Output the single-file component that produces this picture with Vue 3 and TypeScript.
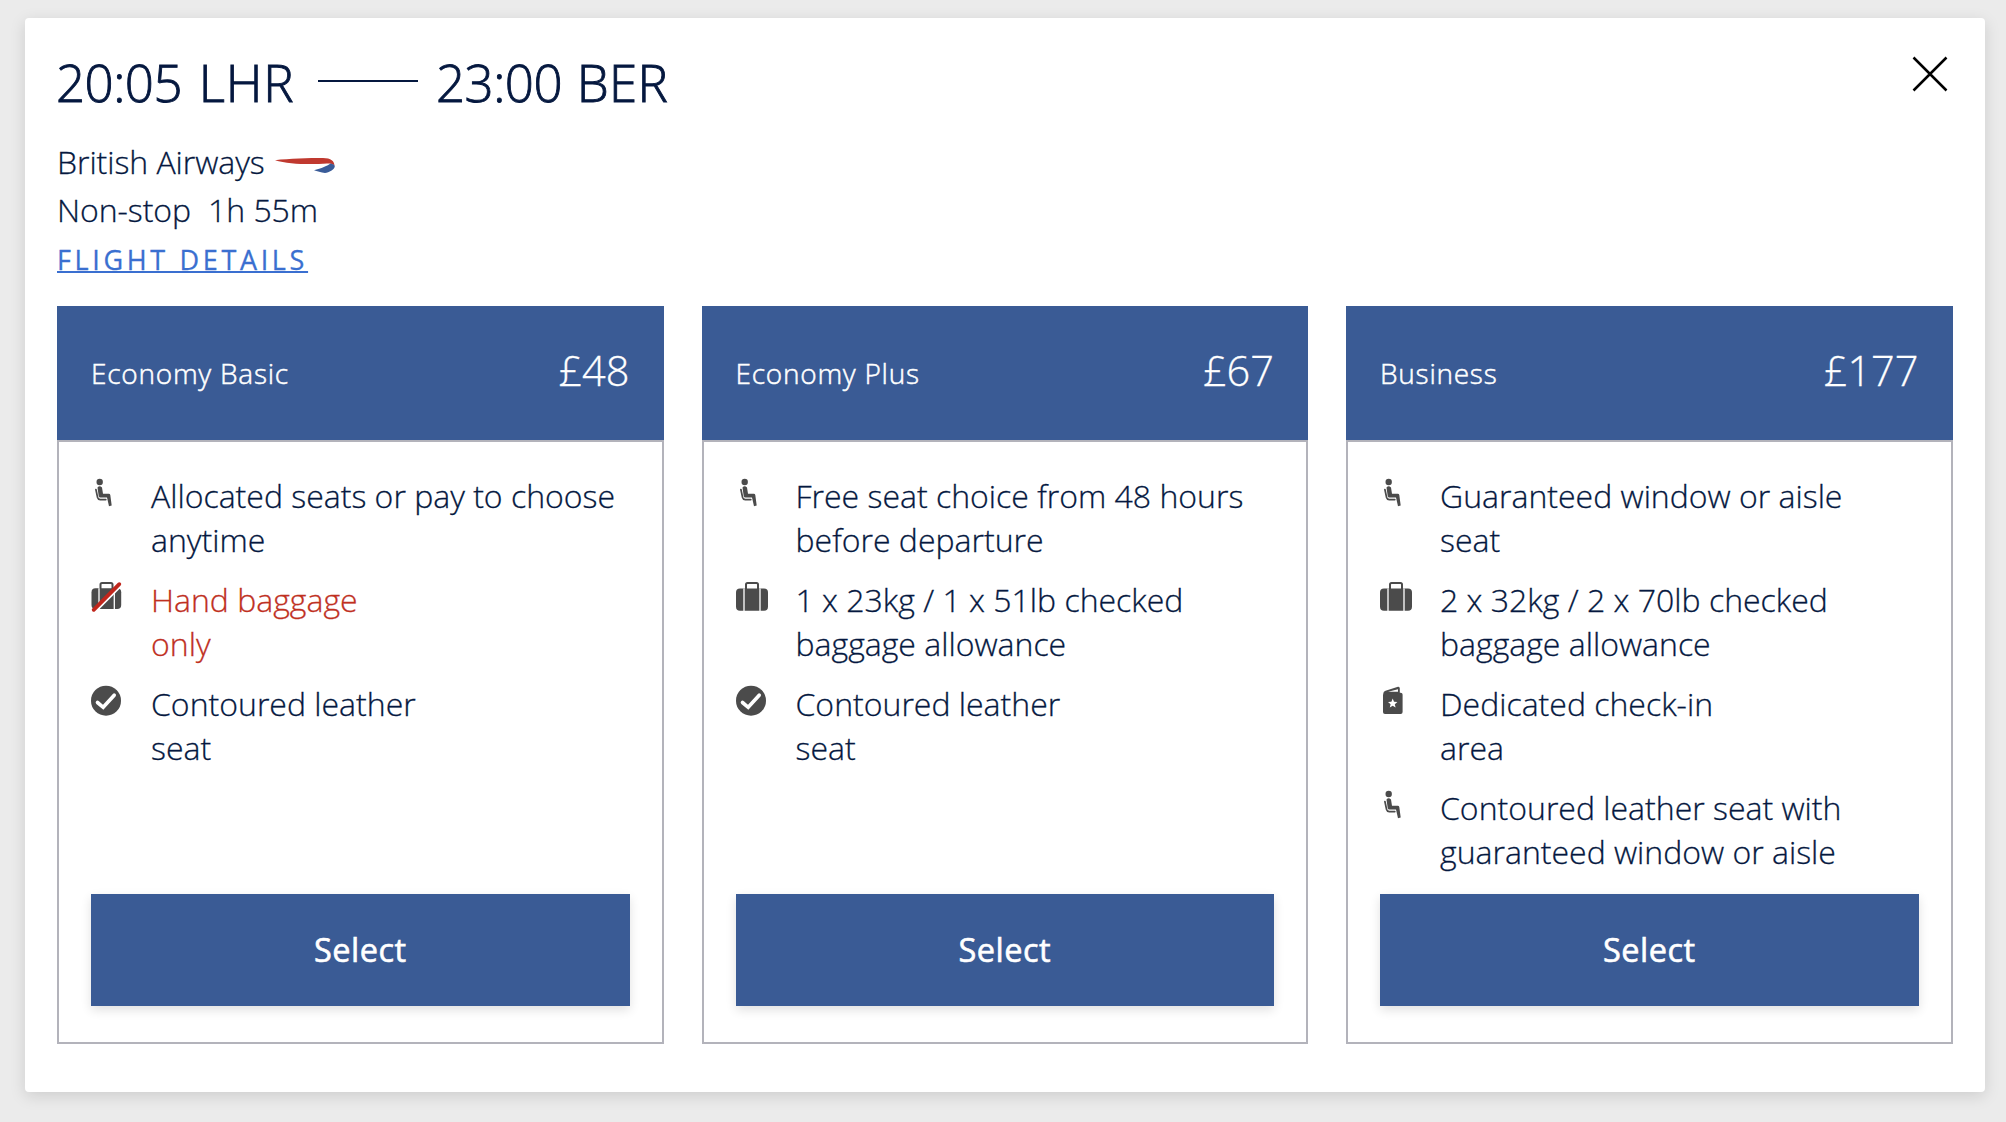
<script setup lang="ts">
type IconName = 'seat' | 'bag' | 'nobag' | 'check' | 'pass'

interface Feature {
  icon: IconName
  lines: string[]
  warn?: boolean
}

interface Fare {
  name: string
  price: string
  features: Feature[]
}

const fares: Fare[] = [
  {
    name: 'Economy Basic',
    price: '£48',
    features: [
      { icon: 'seat', lines: ['Allocated seats or pay to choose', 'anytime'] },
      { icon: 'nobag', lines: ['Hand baggage', 'only'], warn: true },
      { icon: 'check', lines: ['Contoured leather', 'seat'] },
    ],
  },
  {
    name: 'Economy Plus',
    price: '£67',
    features: [
      { icon: 'seat', lines: ['Free seat choice from 48 hours', 'before departure'] },
      { icon: 'bag', lines: ['1 x 23kg / 1 x 51lb checked', 'baggage allowance'] },
      { icon: 'check', lines: ['Contoured leather', 'seat'] },
    ],
  },
  {
    name: 'Business',
    price: '£177',
    features: [
      { icon: 'seat', lines: ['Guaranteed window or aisle', 'seat'] },
      { icon: 'bag', lines: ['2 x 32kg / 2 x 70lb checked', 'baggage allowance'] },
      { icon: 'pass', lines: ['Dedicated check-in', 'area'] },
      { icon: 'seat', lines: ['Contoured leather seat with', 'guaranteed window or aisle'] },
    ],
  },
]
</script>

<template>
  <main class="page">
    <section class="card">
      <header class="top">
        <h1 class="route">
          <span class="point">20:05 <b class="lhr">LHR</b></span>
          <i class="dash"></i>
          <span class="point">23:00 <b class="ber">BER</b></span>
        </h1>
        <button class="close" aria-label="Close">
          <svg width="36" height="36" viewBox="0 0 36 36">
            <path d="M1.500 1.500 34.500 34.500M34.500 1.500 1.500 34.500" stroke="#000" stroke-width="2.500" fill="none" />
          </svg>
        </button>
      </header>

      <div class="info">
        <div class="airline">
          <span>British Airways</span>
          <svg class="ribbon" width="62" height="18" viewBox="0 0 62 18">
            <path d="M0 4.200C14 2.500 34 2 48 2C56 2 59.500 5 59.500 10C58.500 8 56 7.500 52 7.500C36 8.500 14 8.500 0 4.200Z" fill="#c0392f" />
            <path d="M39 14.300C46 12.500 53 9.500 55.500 7.500C58 7.800 59.800 9 59.800 10.500C59.500 13.500 54 16.500 50 17C46 16.500 42 15.500 39 14.300Z" fill="#3a5c99" />
          </svg>
        </div>
        <div class="stops"><span>Non-stop</span><span>1h 55m</span></div>
        <a class="details">FLIGHT DETAILS</a>
      </div>

      <div class="fares">
        <article v-for="fare in fares" :key="fare.name" class="fare">
          <div class="fare-head">
            <span class="name">{{ fare.name }}</span>
            <span class="price">{{ fare.price }}</span>
          </div>
          <div class="fare-body">
            <ul class="features">
              <li v-for="(f, i) in fare.features" :key="i" :class="{ warn: f.warn }">
                <svg class="icon" width="34" height="36" viewBox="0 0 34 36" fill="#4b4b4b">
                  <g v-if="f.icon === 'seat'">
                    <circle cx="8.700" cy="8" r="3.200" />
                    <path d="M6.500 13.500Q8.500 11 11 13.500L12 19.800H17.800Q19 19.800 19.300 21L20.700 31.500 18 32.200 16 23.500H9.500Q8 23.500 7.700 22Z" />
                    <path d="M4.900 15.500 6.600 23.500Q7.200 25.600 9.200 25.600H14.800" fill="none" stroke="#4b4b4b" stroke-width="1.700" stroke-linecap="round" />
                  </g>
                  <g v-else-if="f.icon === 'bag'">
                    <path d="M10 11V6.500Q10 5 11.500 5H20.500Q22 5 22 6.500V11" fill="none" stroke="#4b4b4b" stroke-width="2" />
                    <rect x="0" y="10.600" width="32" height="22.200" rx="4" />
                    <path d="M8 10.600V33M24 10.600V33" stroke="#fff" stroke-width="1.300" />
                  </g>
                  <g v-else-if="f.icon === 'nobag'">
                    <path d="M9.500 11V6.500Q9.500 5 11 5H20Q21.500 5 21.500 6.500V11" fill="none" stroke="#4b4b4b" stroke-width="2" />
                    <rect x="0.500" y="10.200" width="29.700" height="20.800" rx="4" />
                    <path d="M8 10.200V31M23.300 10.200V31" stroke="#fff" stroke-width="1.300" />
                    <path d="M4.700 33 30.300 7.400" stroke="#fff" stroke-width="2.500" />
                    <path d="M2.700 31.800 28.300 6.200" stroke="#c0261c" stroke-width="3.800" stroke-linecap="round" />
                  </g>
                  <g v-else-if="f.icon === 'check'">
                    <circle cx="15" cy="18.700" r="15" />
                    <path d="M6.500 20.500 12.200 25.300 23.200 13.200" fill="none" stroke="#fff" stroke-width="3.600" stroke-linecap="round" />
                  </g>
                  <g v-else>
                    <rect x="3" y="10.800" width="19.600" height="21.200" rx="2" />
                    <path d="M3.200 11.500Q3.500 9.300 5.500 8.700L18 4.800Q19.800 4.500 19.800 6.500V11.500Z" />
                    <path d="M8 9.800 18 7.300V9.800Z" fill="#fff" />
                    <path d="M12.700 16.600 14 19.800 17.400 20 14.800 22.200 15.600 25.600 12.700 23.800 9.800 25.600 10.600 22.200 8 20 11.400 19.800Z" fill="#fff" />
                  </g>
                </svg>
                <p><span v-for="line in f.lines" :key="line">{{ line }}</span></p>
              </li>
            </ul>
            <button class="select">Select</button>
          </div>
        </article>
      </div>
    </section>
  </main>
</template>

<style>
body {
  background: #ebebeb;
}
</style>

<style scoped>
.page {
  box-sizing: border-box;
  width: 2006px;
  height: 1122px;
  padding: 18px 21px 30px 25px;
  overflow: hidden;
  font-family: 'Open Sans', 'Noto Sans', sans-serif;
  font-weight: 300;
  color: #05183f;
  -webkit-text-stroke: 0.3px currentColor;
}
.card {
  box-sizing: border-box;
  height: 1074px;
  padding: 0 32px;
  background: #fff;
  border-radius: 4px;
  box-shadow: 0 4px 16px rgba(0, 0, 0, 0.13);
}
.top {
  display: flex;
  justify-content: space-between;
  height: 120px;
}
.route {
  display: flex;
  align-items: flex-start;
  margin: 29px 0 0 -1px;
  font-size: 51px;
  line-height: 70px;
  font-weight: 300;
  white-space: nowrap;
  -webkit-text-stroke: 0.9px currentColor;
}
.point {
  width: 240px;
  letter-spacing: -0.5px;
}
.point b {
  font-weight: inherit;
}
.lhr {
  margin-left: 4px;
  letter-spacing: 0.8px;
}
.ber {
  margin-left: 2px;
  letter-spacing: 0.2px;
}
.dash {
  width: 100px;
  height: 2px;
  margin: 33px 18px 0 22px;
  background: #05183f;
}
.close {
  display: flex;
  width: 36px;
  height: 36px;
  margin: 38px 5px 0 0;
  padding: 0;
  border: 0;
  background: none;
}
.info {
  display: flex;
  flex-direction: column;
  align-items: flex-start;
  height: 168px;
  font-size: 32px;
  letter-spacing: -0.05px;
}
.airline,
.stops {
  display: flex;
  height: 48px;
  line-height: 48px;
}
.airline {
  gap: 10px;
}
.ribbon {
  margin-top: 18px;
}
.stops {
  gap: 17px;
}
.details {
  margin-top: 9px;
  font-size: 27px;
  line-height: 34px;
  font-weight: 400;
  letter-spacing: 3.65px;
  color: #3a6fd0;
  text-decoration: underline;
  text-decoration-thickness: 1.5px;
  text-underline-offset: 1px;
}
.fares {
  display: grid;
  grid-template-columns: repeat(3, 606.5px);
  gap: 38px;
}
.fare-head {
  box-sizing: border-box;
  display: flex;
  justify-content: space-between;
  align-items: center;
  height: 134px;
  padding: 0 34px;
  color: #fff;
  background: #3a5b95;
}
.name {
  font-size: 28px;
  letter-spacing: 0.75px;
  -webkit-text-stroke: 0.5px currentColor;
}
.price {
  font-size: 41.5px;
  padding-bottom: 6px;
}
.fare-body {
  box-sizing: border-box;
  display: flex;
  flex-direction: column;
  height: 604px;
  padding: 32px 32px 36px;
  border: 2px solid #b3b3bb;
}
.features {
  flex: 1;
  display: flex;
  flex-direction: column;
  gap: 16px;
  margin: 0;
  padding: 0;
  list-style: none;
}
.features li {
  display: flex;
  gap: 26px;
  height: 88px;
}
.icon {
  flex: none;
}
.features p {
  display: flex;
  flex-direction: column;
  margin: 0;
  font-size: 32px;
  line-height: 44px;
  white-space: nowrap;
}
.warn p {
  color: #c0301f;
}
.select {
  height: 112px;
  padding: 0 0 2px;
  border: 0;
  font: 400 32.5px 'Open Sans', sans-serif;
  letter-spacing: 0.5px;
  color: #fff;
  background: #3a5b95;
  box-shadow: 0 4px 10px rgba(0, 0, 0, 0.12);
  -webkit-text-stroke: 0.6px currentColor;
}
</style>
